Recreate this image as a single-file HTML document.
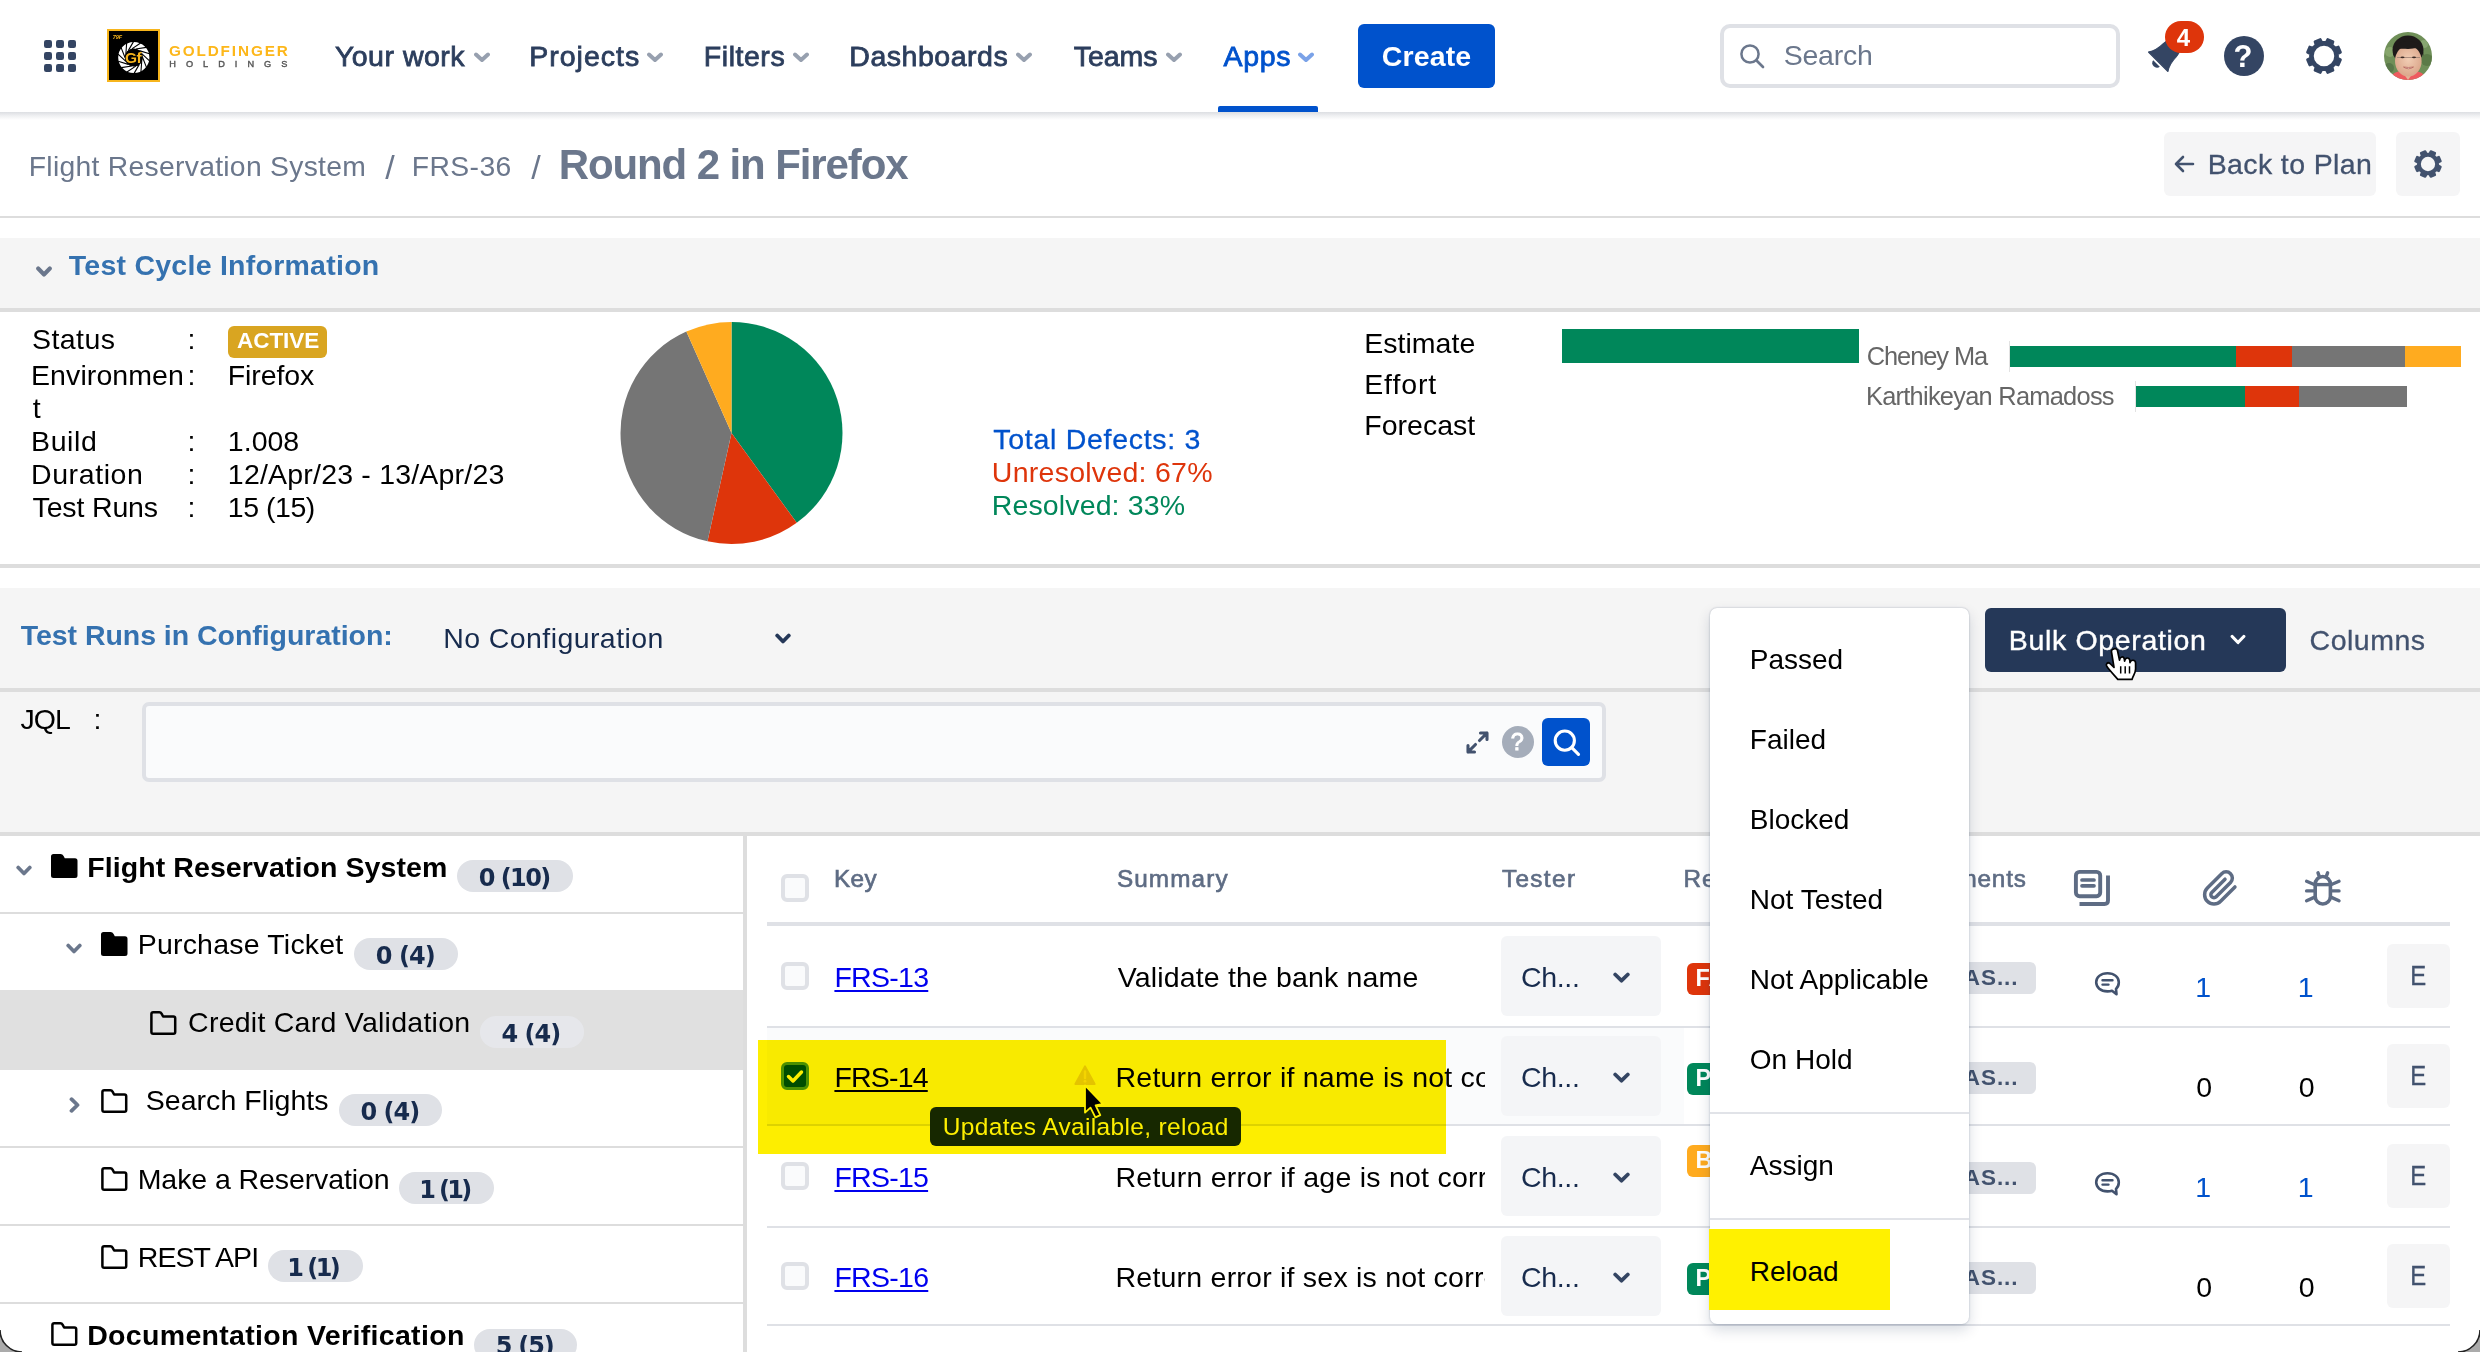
<!DOCTYPE html>
<html lang="en"><head><meta charset="utf-8"><title>Round 2 in Firefox - Test Cycle</title>
<style>
html,body{margin:0;padding:0;background:#fff;}
body{width:2480px;height:1352px;overflow:hidden;position:relative;font-family:"Liberation Sans",sans-serif;font-variant-ligatures:none;}
.t{position:absolute;white-space:nowrap;line-height:1;margin:0;padding:0;}
.r{position:absolute;box-sizing:border-box;}
a.t{text-decoration:underline;}
</style></head><body>
<div class="r" style="left:0px;top:112px;width:2480px;height:8px;background:linear-gradient(#DCDEE2,#EEEFF1 45%,#fff);"></div>
<div class="r" style="left:0px;top:215.5px;width:2480px;height:2.0px;background:#DDDDDD;"></div>
<div class="r" style="left:0px;top:238px;width:2480px;height:70px;background:#F5F5F5;"></div>
<div class="r" style="left:0px;top:308px;width:2480px;height:4px;background:#DDDDDD;"></div>
<div class="r" style="left:0px;top:564px;width:2480px;height:4px;background:#DDDDDD;"></div>
<div class="r" style="left:0px;top:588px;width:2480px;height:100px;background:#F5F5F5;"></div>
<div class="r" style="left:0px;top:688px;width:2480px;height:4px;background:#DDDDDD;"></div>
<div class="r" style="left:0px;top:692px;width:2480px;height:140px;background:#F5F5F5;"></div>
<div class="r" style="left:0px;top:832px;width:2480px;height:4px;background:#DDDDDD;"></div>
<div class="r" style="left:743px;top:836px;width:4px;height:516px;background:#DDDDDD;"></div>
<svg class="r" style="left:44px;top:40px;" width="32" height="32" viewBox="0 0 32 32"><rect x="0" y="0" width="8" height="8" rx="2.2" fill="#344563"/><rect x="12" y="0" width="8" height="8" rx="2.2" fill="#344563"/><rect x="24" y="0" width="8" height="8" rx="2.2" fill="#344563"/><rect x="0" y="12" width="8" height="8" rx="2.2" fill="#344563"/><rect x="12" y="12" width="8" height="8" rx="2.2" fill="#344563"/><rect x="24" y="12" width="8" height="8" rx="2.2" fill="#344563"/><rect x="0" y="24" width="8" height="8" rx="2.2" fill="#344563"/><rect x="12" y="24" width="8" height="8" rx="2.2" fill="#344563"/><rect x="24" y="24" width="8" height="8" rx="2.2" fill="#344563"/></svg>
<svg class="r" style="left:107px;top:29px;" width="53" height="53" viewBox="0 0 53 53"><rect x="1" y="1" width="51" height="51" fill="#000" stroke="#F7B51C" stroke-width="2"/>
<circle cx="26.8" cy="28.5" r="12.20" fill="none" stroke="#fff" stroke-width="6.80"/>
<path d="M35.60 28.50 L39.49 38.41 M34.73 32.32 L33.93 42.94 M32.29 35.38 L26.96 44.60 M28.76 37.08 L19.96 43.07 M24.84 37.08 L14.31 38.66 M21.31 35.38 L11.14 32.24 M18.87 32.32 L11.07 25.07 M18.00 28.50 L14.11 18.59 M18.87 24.68 L19.67 14.06 M21.31 21.62 L26.64 12.40 M24.84 19.92 L33.64 13.93 M28.76 19.92 L39.29 18.34 M32.29 21.62 L42.46 24.76 M34.73 24.68 L42.53 31.93 " stroke="#000" stroke-width="1.1" fill="none"/>
<circle cx="26.8" cy="28.5" r="9.100000000000001" fill="#000"/></svg>
<span class="t"  style="left:112.75px;top:34.83px;font-size:5.5px;color:#F7B51C;font-weight:bold;font-style:italic;">79F</span>
<span class="t"  style="left:125.08px;top:50.12px;font-size:15.5px;color:#F7B51C;font-weight:bold;letter-spacing:-0.663px;">Gf</span>
<span class="t"  style="left:168.89px;top:42.99px;font-size:15.3px;color:#FDB71A;font-weight:bold;letter-spacing:1.883px;">GOLDFINGER</span>
<span class="t"  style="left:169.26px;top:59.68px;font-size:9.2px;color:#555;letter-spacing:10.018px;-webkit-text-stroke:0.4px #555;">HOLDINGS</span>
<span class="t"  style="left:334.89px;top:42.08px;font-size:28.5px;color:#2C3E5D;letter-spacing:0.503px;-webkit-text-stroke:0.8px #2C3E5D;">Your work</span>
<svg class="r" style="left:474px;top:51.5px;" width="16" height="11" viewBox="0 0 16 11"><path d="M2 2.5 L8 8 L14 2.5" fill="none" stroke="#97A0AF" stroke-width="4" stroke-linecap="round" stroke-linejoin="round"/></svg>
<span class="t"  style="left:529.32px;top:42.08px;font-size:28.5px;color:#2C3E5D;letter-spacing:0.985px;-webkit-text-stroke:0.8px #2C3E5D;">Projects</span>
<svg class="r" style="left:647px;top:51.5px;" width="16" height="11" viewBox="0 0 16 11"><path d="M2 2.5 L8 8 L14 2.5" fill="none" stroke="#97A0AF" stroke-width="4" stroke-linecap="round" stroke-linejoin="round"/></svg>
<span class="t"  style="left:703.82px;top:42.08px;font-size:28.5px;color:#2C3E5D;letter-spacing:0.543px;-webkit-text-stroke:0.8px #2C3E5D;">Filters</span>
<svg class="r" style="left:793px;top:51.5px;" width="16" height="11" viewBox="0 0 16 11"><path d="M2 2.5 L8 8 L14 2.5" fill="none" stroke="#97A0AF" stroke-width="4" stroke-linecap="round" stroke-linejoin="round"/></svg>
<span class="t"  style="left:849.32px;top:42.08px;font-size:28.5px;color:#2C3E5D;letter-spacing:0.518px;-webkit-text-stroke:0.8px #2C3E5D;">Dashboards</span>
<svg class="r" style="left:1016px;top:51.5px;" width="16" height="11" viewBox="0 0 16 11"><path d="M2 2.5 L8 8 L14 2.5" fill="none" stroke="#97A0AF" stroke-width="4" stroke-linecap="round" stroke-linejoin="round"/></svg>
<span class="t"  style="left:1073.69px;top:42.08px;font-size:28.5px;color:#2C3E5D;letter-spacing:-0.006px;-webkit-text-stroke:0.8px #2C3E5D;">Teams</span>
<svg class="r" style="left:1166px;top:51.5px;" width="16" height="11" viewBox="0 0 16 11"><path d="M2 2.5 L8 8 L14 2.5" fill="none" stroke="#97A0AF" stroke-width="4" stroke-linecap="round" stroke-linejoin="round"/></svg>
<span class="t"  style="left:1223.46px;top:42.08px;font-size:28.5px;color:#0052CC;letter-spacing:0.720px;-webkit-text-stroke:0.8px #0052CC;">Apps</span>
<svg class="r" style="left:1298px;top:51.5px;" width="16" height="11" viewBox="0 0 16 11"><path d="M2 2.5 L8 8 L14 2.5" fill="none" stroke="#7AA2E8" stroke-width="4" stroke-linecap="round" stroke-linejoin="round"/></svg>
<div class="r" style="left:1218px;top:106px;width:100px;height:6px;background:#0052CC;border-radius:2px 2px 0 0;"></div>
<div class="r" style="left:1358px;top:24px;width:137px;height:64px;background:#0052CC;border-radius:6px;"></div>
<span class="t"  style="left:1381.86px;top:42.08px;font-size:28.5px;color:#fff;font-weight:bold;letter-spacing:0.100px;">Create</span>
<div class="r" style="left:1720px;top:24px;width:400px;height:64px;background:#fff;border-radius:10px;border:4px solid #DFE1E6;"></div>
<svg class="r" style="left:1738px;top:42px;" width="30" height="30" viewBox="0 0 30 30"><circle cx="12" cy="12" r="8.6" fill="none" stroke="#6B778C" stroke-width="2.5"/><path d="M18.5 18.5 L25 25" stroke="#6B778C" stroke-width="2.7" stroke-linecap="round"/></svg>
<span class="t"  style="left:1783.72px;top:41.28px;font-size:28.5px;color:#6B778C;letter-spacing:-0.254px;">Search</span>
<svg class="r" style="left:2140px;top:26px;" width="54" height="54" viewBox="0 0 54 54"><g transform="translate(27 27) rotate(45)"><path d="M-13.8 12.5 C-10.5 7.5 -9.3 2 -9.3 -4 C-9.3 -10.5 -5 -14.5 0 -14.5 C5 -14.5 9.3 -10.5 9.3 -4 C9.3 2 10.5 7.5 13.8 12.5 Z" fill="#344563" stroke="#344563" stroke-width="1" stroke-linejoin="round"/><path d="M-4.6 14.8 H4.6 a4.6 4 0 0 1 -9.2 0 Z" fill="#344563"/></g></svg>
<div class="r" style="left:2165px;top:21px;width:39px;height:32px;background:#DE350B;border-radius:16px;"></div>
<span class="t"  style="left:2176.64px;top:25.80px;font-size:24px;color:#fff;font-weight:bold;">4</span>
<svg class="r" style="left:2224px;top:36px;" width="40" height="40" viewBox="0 0 40 40"><circle cx="20" cy="20" r="20" fill="#344563"/></svg>
<span class="t"  style="left:2233.61px;top:40.65px;font-size:31px;color:#fff;font-weight:bold;">?</span>
<svg class="r" style="left:2303.5px;top:35.5px;" width="40" height="40" viewBox="0 0 40 40"><path d="M23.71 3.41 L29.11 5.65 L28.11 8.84 L31.16 11.89 L34.35 10.89 L36.59 16.29 L33.63 17.84 L33.63 22.16 L36.59 23.71 L34.35 29.11 L31.16 28.11 L28.11 31.16 L29.11 34.35 L23.71 36.59 L22.16 33.63 L17.84 33.63 L16.29 36.59 L10.89 34.35 L11.89 31.16 L8.84 28.11 L5.65 29.11 L3.41 23.71 L6.37 22.16 L6.37 17.84 L3.41 16.29 L5.65 10.89 L8.84 11.89 L11.89 8.84 L10.89 5.65 L16.29 3.41 L17.84 6.37 L22.16 6.37 Z M8.5 20 a11.5 11.5 0 1 0 23.0 0 a11.5 11.5 0 1 0 -23.0 0 Z" fill="#344563" fill-rule="evenodd" stroke="#344563" stroke-width="2.5" stroke-linejoin="round"/></svg>
<svg class="r" style="left:2384px;top:32px;" width="48" height="48" viewBox="0 0 48 48"><defs><clipPath id="avc"><circle cx="24" cy="24" r="24"/></clipPath>
<radialGradient id="avf" cx="50%" cy="45%" r="60%"><stop offset="0" stop-color="#F1CDB4"/><stop offset="1" stop-color="#D9A387"/></radialGradient></defs>
<g clip-path="url(#avc)"><rect width="48" height="48" fill="#6F8F58"/>
<circle cx="6" cy="20" r="5" fill="#86A56B"/><circle cx="43" cy="28" r="6" fill="#5B7A47"/><circle cx="40" cy="12" r="4" fill="#87A670"/><circle cx="5" cy="36" r="5" fill="#59784A"/>
<path d="M6 48 C8 40 15 38 24 39 C33 38 40 40 43 48 Z" fill="#EE5B5F"/>
<ellipse cx="24" cy="18" rx="15.5" ry="14.5" fill="#1E1A19"/>
<path d="M17 38 L24 48 L31 38 Z" fill="#E3B398"/>
<ellipse cx="24.3" cy="29" rx="13.3" ry="15.5" fill="url(#avf)"/>
<path d="M9 24 C9 12 16 9 24 9.5 C33 9 39.5 12 39.5 24 C38 18 34 15.5 29 16.5 C22 18 15 15 12 19 C10.5 21 10 23 9 24 Z" fill="#1E1A19"/>
<path d="M13 25.5 H36" stroke="#9b7f72" stroke-width="0.8" fill="none"/>
<ellipse cx="18.5" cy="25.3" rx="2" ry="0.9" fill="#3a2a25"/><ellipse cx="30" cy="25.3" rx="2" ry="0.9" fill="#3a2a25"/>
<path d="M19.5 35 Q24.5 38.5 29.5 35 Q24.5 36 19.5 35 Z" fill="#fff" stroke="#B5635A" stroke-width="0.8"/>
</g></svg>
<span class="t"  style="left:28.74px;top:151.75px;font-size:28.3px;color:#6B778C;letter-spacing:0.285px;">Flight Reservation System</span>
<span class="t"  style="left:385.30px;top:149.60px;font-size:34px;color:#6B778C;">/</span>
<span class="t"  style="left:411.74px;top:151.75px;font-size:28.3px;color:#6B778C;letter-spacing:0.409px;">FRS-36</span>
<span class="t"  style="left:531.30px;top:149.60px;font-size:34px;color:#6B778C;">/</span>
<span class="t"  style="left:558.77px;top:143.50px;font-size:42px;color:#6B778C;font-weight:bold;letter-spacing:-1.112px;">Round 2 in Firefox</span>
<div class="r" style="left:2164px;top:132px;width:212px;height:64px;background:#F5F5F6;border-radius:6px;"></div>
<svg class="r" style="left:2173px;top:154px;" width="22" height="20" viewBox="0 0 22 20"><path d="M20 10 L3 10 M10 3 L3 10 L10 17" fill="none" stroke="#42526E" stroke-width="2.6" stroke-linecap="round" stroke-linejoin="round"/></svg>
<span class="t"  style="left:2207.72px;top:149.78px;font-size:28.5px;color:#42526E;letter-spacing:0.373px;-webkit-text-stroke:0.3px #42526E;">Back to Plan</span>
<div class="r" style="left:2396px;top:132px;width:64px;height:64px;background:#F5F5F6;border-radius:6px;"></div>
<svg class="r" style="left:2412px;top:148px;" width="32" height="32" viewBox="0 0 32 32"><path d="M18.79 3.51 L22.86 5.19 L21.88 7.91 L24.09 10.12 L26.81 9.14 L28.49 13.21 L25.88 14.44 L25.88 17.56 L28.49 18.79 L26.81 22.86 L24.09 21.88 L21.88 24.09 L22.86 26.81 L18.79 28.49 L17.56 25.88 L14.44 25.88 L13.21 28.49 L9.14 26.81 L10.12 24.09 L7.91 21.88 L5.19 22.86 L3.51 18.79 L6.12 17.56 L6.12 14.44 L3.51 13.21 L5.19 9.14 L7.91 10.12 L10.12 7.91 L9.14 5.19 L13.21 3.51 L14.44 6.12 L17.56 6.12 Z M7.6 16 a8.4 8.4 0 1 0 16.8 0 a8.4 8.4 0 1 0 -16.8 0 Z" fill="#42526E" fill-rule="evenodd" stroke="#42526E" stroke-width="2.5" stroke-linejoin="round"/></svg>
<svg class="r" style="left:36px;top:266px;" width="16" height="12" viewBox="0 0 16 12"><path d="M2.2 2.5 L8 8.5 L13.8 2.5" fill="none" stroke="#6B778C" stroke-width="4.1" stroke-linecap="round" stroke-linejoin="round"/></svg>
<span class="t"  style="left:68.72px;top:250.78px;font-size:28.5px;color:#3572B0;font-weight:bold;letter-spacing:0.257px;">Test Cycle Information</span>
<span class="t"  style="left:32.02px;top:324.77px;font-size:28.5px;color:#000;letter-spacing:0.437px;">Status</span>
<span class="t"  style="left:31.02px;top:360.77px;font-size:28.5px;color:#000;letter-spacing:0.087px;">Environmen</span>
<span class="t"  style="left:32.87px;top:393.77px;font-size:28.5px;color:#000;">t</span>
<span class="t"  style="left:31.02px;top:427.27px;font-size:28.5px;color:#000;letter-spacing:0.605px;">Build</span>
<span class="t"  style="left:31.02px;top:459.77px;font-size:28.5px;color:#000;letter-spacing:0.586px;">Duration</span>
<span class="t"  style="left:32.59px;top:493.27px;font-size:28.5px;color:#000;letter-spacing:-0.159px;">Test Runs</span>
<span class="t"  style="left:187.44px;top:324.77px;font-size:28.5px;color:#000;">:</span>
<span class="t"  style="left:187.44px;top:360.77px;font-size:28.5px;color:#000;">:</span>
<span class="t"  style="left:187.44px;top:427.27px;font-size:28.5px;color:#000;">:</span>
<span class="t"  style="left:187.44px;top:459.77px;font-size:28.5px;color:#000;">:</span>
<span class="t"  style="left:187.44px;top:493.27px;font-size:28.5px;color:#000;">:</span>
<div class="r" style="left:228px;top:326px;width:99px;height:32px;background:#D9A521;border-radius:6px;"></div>
<span class="t"  style="left:236.94px;top:330.38px;font-size:22.5px;color:#fff;font-weight:bold;letter-spacing:-0.022px;">ACTIVE</span>
<span class="t"  style="left:227.72px;top:360.77px;font-size:28.5px;color:#000;letter-spacing:-0.084px;">Firefox</span>
<span class="t"  style="left:227.86px;top:427.27px;font-size:28.5px;color:#000;letter-spacing:0.007px;">1.008</span>
<span class="t"  style="left:227.86px;top:459.77px;font-size:28.5px;color:#000;letter-spacing:0.198px;">12/Apr/23 - 13/Apr/23</span>
<span class="t"  style="left:227.86px;top:493.27px;font-size:28.5px;color:#000;letter-spacing:-0.476px;">15 (15)</span>
<svg class="r" style="left:0px;top:0px;pointer-events:none;" width="2480" height="1352" viewBox="0 0 2480 1352"><path d="M731.5 433 L731.50 322.00 A111 111 0 0 1 796.74 522.80 Z" fill="#00875A"/><path d="M731.5 433 L796.74 522.80 A111 111 0 0 1 707.48 541.37 Z" fill="#DE350B"/><path d="M731.5 433 L707.48 541.37 A111 111 0 0 1 686.35 331.60 Z" fill="#757575"/><path d="M731.5 433 L686.35 331.60 A111 111 0 0 1 731.50 322.00 Z" fill="#FFAB1F"/></svg>
<span class="t"  style="left:993.29px;top:424.77px;font-size:28.5px;color:#0052CC;letter-spacing:0.709px;-webkit-text-stroke:0.3px #0052CC;">Total Defects: 3</span>
<span class="t"  style="left:991.86px;top:457.77px;font-size:28.5px;color:#DE350B;letter-spacing:0.258px;">Unresolved: 67%</span>
<span class="t"  style="left:991.72px;top:490.77px;font-size:28.5px;color:#00875A;letter-spacing:0.135px;">Resolved: 33%</span>
<span class="t"  style="left:1364.22px;top:328.77px;font-size:28.5px;color:#000;letter-spacing:0.028px;">Estimate</span>
<span class="t"  style="left:1364.22px;top:369.77px;font-size:28.5px;color:#000;letter-spacing:0.875px;">Effort</span>
<span class="t"  style="left:1364.22px;top:410.77px;font-size:28.5px;color:#000;letter-spacing:0.029px;">Forecast</span>
<div class="r" style="left:1562px;top:328.5px;width:297px;height:34.5px;background:#00875A;"></div>
<span class="t"  style="left:1866.73px;top:344.21px;font-size:25.4px;color:#666;letter-spacing:-1.044px;">Cheney Ma</span>
<span class="t"  style="left:1865.97px;top:384.21px;font-size:25.4px;color:#666;letter-spacing:-0.732px;">Karthikeyan Ramadoss</span>
<div class="r" style="left:2009px;top:341px;width:1px;height:31px;background:#E2E2E2;"></div>
<div class="r" style="left:2010px;top:346.2px;width:225.5px;height:21.0px;background:#00875A;"></div>
<div class="r" style="left:2235.5px;top:346.2px;width:56.0px;height:21.0px;background:#DE350B;"></div>
<div class="r" style="left:2291.5px;top:346.2px;width:113.0px;height:21.0px;background:#757575;"></div>
<div class="r" style="left:2404.5px;top:346.2px;width:56.5px;height:21.0px;background:#FFAB1F;"></div>
<div class="r" style="left:2134.5px;top:381px;width:1.0px;height:31px;background:#E2E2E2;"></div>
<div class="r" style="left:2135.5px;top:386.2px;width:109.0px;height:21.0px;background:#00875A;"></div>
<div class="r" style="left:2244.5px;top:386.2px;width:54.0px;height:21.0px;background:#DE350B;"></div>
<div class="r" style="left:2298.5px;top:386.2px;width:108.5px;height:21.0px;background:#757575;"></div>
<span class="t"  style="left:20.71px;top:620.77px;font-size:28.5px;color:#3572B0;font-weight:bold;letter-spacing:-0.041px;">Test Runs in Configuration:</span>
<span class="t"  style="left:443.22px;top:624.27px;font-size:28.5px;color:#172B4D;letter-spacing:0.416px;">No Configuration</span>
<svg class="r" style="left:775px;top:633px;" width="16" height="12" viewBox="0 0 16 12"><path d="M2.2 2.5 L8 8.5 L13.8 2.5" fill="none" stroke="#253858" stroke-width="3.8" stroke-linecap="round" stroke-linejoin="round"/></svg>
<div class="r" style="left:1985px;top:608px;width:301px;height:64px;background:#253858;border-radius:6px;"></div>
<span class="t"  style="left:2008.72px;top:625.77px;font-size:28.5px;color:#fff;letter-spacing:0.662px;-webkit-text-stroke:0.4px #fff;">Bulk Operation</span>
<svg class="r" style="left:2230px;top:634px;" width="16" height="12" viewBox="0 0 16 12"><path d="M2.2 2.5 L8 8.5 L13.8 2.5" fill="none" stroke="#fff" stroke-width="3.2" stroke-linecap="round" stroke-linejoin="round"/></svg>
<span class="t"  style="left:2309.57px;top:625.77px;font-size:28.5px;color:#42526E;letter-spacing:0.498px;-webkit-text-stroke:0.3px #42526E;">Columns</span>
<span class="t"  style="left:20.57px;top:704.77px;font-size:28.5px;color:#000;letter-spacing:-1.008px;">JQL</span>
<span class="t"  style="left:93.44px;top:704.77px;font-size:28.5px;color:#000;">:</span>
<div class="r" style="left:142px;top:702px;width:1464px;height:80px;background:#FAFBFC;border-radius:7px;border:4px solid #DFE1E6;"></div>
<svg class="r" style="left:1465px;top:730px;" width="25" height="25" viewBox="0 0 25 25"><path d="M14.5 10.5 L22 3 M15.5 3 L22 3 L22 9.5 M10.5 14.5 L3 22 M3 15.5 L3 22 L9.5 22" fill="none" stroke="#42526E" stroke-width="3.1" stroke-linecap="round" stroke-linejoin="round"/></svg>
<svg class="r" style="left:1502px;top:726px;" width="32" height="32" viewBox="0 0 32 32"><circle cx="16" cy="16" r="16" fill="#A5ADBA"/></svg>
<span class="t"  style="left:1510.86px;top:730.52px;font-size:23.5px;color:#fff;-webkit-text-stroke:0.9px #fff;">?</span>
<div class="r" style="left:1542px;top:718px;width:48px;height:48px;background:#0052CC;border-radius:6px;"></div>
<svg class="r" style="left:1552px;top:728px;" width="30" height="30" viewBox="0 0 30 30"><circle cx="12.8" cy="12.6" r="9.6" fill="none" stroke="#fff" stroke-width="3.1"/><path d="M19.8 19.6 L26.5 26.3" stroke="#fff" stroke-width="3.1" stroke-linecap="round"/></svg>
<div class="r" style="left:0px;top:990px;width:743px;height:80px;background:#E0E0E0;"></div>
<div class="r" style="left:0px;top:912px;width:743px;height:2px;background:#DDDDDD;"></div>
<div class="r" style="left:0px;top:1146px;width:743px;height:2px;background:#DDDDDD;"></div>
<div class="r" style="left:0px;top:1224px;width:743px;height:2px;background:#DDDDDD;"></div>
<div class="r" style="left:0px;top:1302px;width:743px;height:2px;background:#DDDDDD;"></div>
<svg class="r" style="left:16px;top:864.5px;" width="16" height="12" viewBox="0 0 16 12"><path d="M2.2 2.5 L8 8.5 L13.8 2.5" fill="none" stroke="#6B778C" stroke-width="3.7" stroke-linecap="round" stroke-linejoin="round"/></svg>
<svg class="r" style="left:51px;top:854px;" width="27" height="24" viewBox="0 0 27 24"><path d="M2.5 0 H9.5 Q11.6 0 12.6 1.9 L13.8 4.2 H24 Q26.5 4.2 26.5 6.7 V21.5 Q26.5 24 24 24 H2.5 Q0 24 0 21.5 V2.5 Q0 0 2.5 0 Z" fill="#000"/></svg>
<span class="t"  style="left:87.15px;top:852.77px;font-size:28.5px;color:#000;font-weight:bold;letter-spacing:0.094px;">Flight Reservation System</span>
<div class="r" style="left:457px;top:860px;width:115.5px;height:32px;background:#DFE1E6;border-radius:16px;"></div>
<span class="t"  style="left:478.80px;top:865.72px;font-size:24px;color:#172B4D;font-weight:bold;letter-spacing:-1.592px;font-family:'DejaVu Sans',sans-serif;">0 (10)</span>
<svg class="r" style="left:66px;top:942.5px;" width="16" height="12" viewBox="0 0 16 12"><path d="M2.2 2.5 L8 8.5 L13.8 2.5" fill="none" stroke="#6B778C" stroke-width="3.7" stroke-linecap="round" stroke-linejoin="round"/></svg>
<svg class="r" style="left:100.75px;top:932px;" width="27" height="24" viewBox="0 0 27 24"><path d="M2.5 0 H9.5 Q11.6 0 12.6 1.9 L13.8 4.2 H24 Q26.5 4.2 26.5 6.7 V21.5 Q26.5 24 24 24 H2.5 Q0 24 0 21.5 V2.5 Q0 0 2.5 0 Z" fill="#000"/></svg>
<span class="t"  style="left:137.72px;top:930.07px;font-size:28.5px;color:#000;letter-spacing:0.199px;">Purchase Ticket</span>
<div class="r" style="left:354px;top:938px;width:103.5px;height:32px;background:#DFE1E6;border-radius:16px;"></div>
<span class="t"  style="left:375.80px;top:943.72px;font-size:24px;color:#172B4D;font-weight:bold;letter-spacing:-0.915px;font-family:'DejaVu Sans',sans-serif;">0 (4)</span>
<svg class="r" style="left:149.75px;top:1010.5px;" width="27" height="24" viewBox="0 0 27 24"><path d="M3.2 1.3 H9.3 Q10.9 1.3 11.7 2.8 L13.1 5.5 H23.4 Q25.2 5.5 25.2 7.3 V20.9 Q25.2 22.7 23.4 22.7 H3.2 Q1.4 22.7 1.4 20.9 V3.1 Q1.4 1.3 3.2 1.3 Z" fill="none" stroke="#000" stroke-width="2.5" stroke-linejoin="round"/></svg>
<span class="t"  style="left:188.07px;top:1008.48px;font-size:28.5px;color:#000;letter-spacing:0.254px;">Credit Card Validation</span>
<div class="r" style="left:480px;top:1016px;width:103.70000000000005px;height:32px;background:#E6E7EB;border-radius:16px;"></div>
<span class="t"  style="left:501.42px;top:1021.72px;font-size:24px;color:#172B4D;font-weight:bold;letter-spacing:-0.945px;font-family:'DejaVu Sans',sans-serif;">4 (4)</span>
<svg class="r" style="left:69px;top:1096.5px;" width="12" height="16" viewBox="0 0 12 16"><path d="M2.5 2.2 L8.5 8 L2.5 13.8" fill="none" stroke="#6B778C" stroke-width="3.8" stroke-linecap="round" stroke-linejoin="round"/></svg>
<svg class="r" style="left:100.75px;top:1088.5px;" width="27" height="24" viewBox="0 0 27 24"><path d="M3.2 1.3 H9.3 Q10.9 1.3 11.7 2.8 L13.1 5.5 H23.4 Q25.2 5.5 25.2 7.3 V20.9 Q25.2 22.7 23.4 22.7 H3.2 Q1.4 22.7 1.4 20.9 V3.1 Q1.4 1.3 3.2 1.3 Z" fill="none" stroke="#000" stroke-width="2.5" stroke-linejoin="round"/></svg>
<span class="t"  style="left:145.72px;top:1086.48px;font-size:28.5px;color:#000;letter-spacing:0.051px;">Search Flights</span>
<div class="r" style="left:339px;top:1094px;width:102.69999999999999px;height:32px;background:#DFE1E6;border-radius:16px;"></div>
<span class="t"  style="left:360.50px;top:1099.72px;font-size:24px;color:#172B4D;font-weight:bold;letter-spacing:-1.015px;font-family:'DejaVu Sans',sans-serif;">0 (4)</span>
<svg class="r" style="left:100.75px;top:1166.5px;" width="27" height="24" viewBox="0 0 27 24"><path d="M3.2 1.3 H9.3 Q10.9 1.3 11.7 2.8 L13.1 5.5 H23.4 Q25.2 5.5 25.2 7.3 V20.9 Q25.2 22.7 23.4 22.7 H3.2 Q1.4 22.7 1.4 20.9 V3.1 Q1.4 1.3 3.2 1.3 Z" fill="none" stroke="#000" stroke-width="2.5" stroke-linejoin="round"/></svg>
<span class="t"  style="left:137.72px;top:1164.78px;font-size:28.5px;color:#000;letter-spacing:-0.090px;">Make a Reservation</span>
<div class="r" style="left:399.2px;top:1172px;width:94.5px;height:32px;background:#DFE1E6;border-radius:16px;"></div>
<span class="t"  style="left:419.24px;top:1177.72px;font-size:24px;color:#172B4D;font-weight:bold;letter-spacing:-2.700px;font-family:'DejaVu Sans',sans-serif;">1 (1)</span>
<svg class="r" style="left:100.75px;top:1244.5px;" width="27" height="24" viewBox="0 0 27 24"><path d="M3.2 1.3 H9.3 Q10.9 1.3 11.7 2.8 L13.1 5.5 H23.4 Q25.2 5.5 25.2 7.3 V20.9 Q25.2 22.7 23.4 22.7 H3.2 Q1.4 22.7 1.4 20.9 V3.1 Q1.4 1.3 3.2 1.3 Z" fill="none" stroke="#000" stroke-width="2.5" stroke-linejoin="round"/></svg>
<span class="t"  style="left:137.72px;top:1242.78px;font-size:28.5px;color:#000;letter-spacing:-0.919px;">REST API</span>
<div class="r" style="left:268px;top:1250px;width:94.5px;height:32px;background:#DFE1E6;border-radius:16px;"></div>
<span class="t"  style="left:287.24px;top:1255.72px;font-size:24px;color:#172B4D;font-weight:bold;letter-spacing:-2.525px;font-family:'DejaVu Sans',sans-serif;">1 (1)</span>
<svg class="r" style="left:51px;top:1322px;" width="27" height="24" viewBox="0 0 27 24"><path d="M3.2 1.3 H9.3 Q10.9 1.3 11.7 2.8 L13.1 5.5 H23.4 Q25.2 5.5 25.2 7.3 V20.9 Q25.2 22.7 23.4 22.7 H3.2 Q1.4 22.7 1.4 20.9 V3.1 Q1.4 1.3 3.2 1.3 Z" fill="none" stroke="#000" stroke-width="2.5" stroke-linejoin="round"/></svg>
<span class="t"  style="left:87.15px;top:1320.78px;font-size:28.5px;color:#000;font-weight:bold;letter-spacing:0.329px;">Documentation Verification</span>
<div class="r" style="left:474.2px;top:1328.5px;width:102.50000000000006px;height:32.0px;background:#DFE1E6;border-radius:16px;"></div>
<span class="t"  style="left:495.70px;top:1334.22px;font-size:24px;color:#172B4D;font-weight:bold;letter-spacing:-1.190px;font-family:'DejaVu Sans',sans-serif;">5 (5)</span>
<div class="r" style="left:781px;top:874px;width:28px;height:28px;background:#FAFBFC;border-radius:6px;border:4px solid #DFE1E6;"></div>
<span class="t"  style="left:834.06px;top:866.64px;font-size:24.3px;color:#5E6C84;letter-spacing:0.324px;-webkit-text-stroke:0.65px #5E6C84;">Key</span>
<span class="t"  style="left:1116.91px;top:866.64px;font-size:24.3px;color:#5E6C84;letter-spacing:1.118px;-webkit-text-stroke:0.65px #5E6C84;">Summary</span>
<span class="t"  style="left:1501.89px;top:866.64px;font-size:24.3px;color:#5E6C84;letter-spacing:1.395px;-webkit-text-stroke:0.65px #5E6C84;">Tester</span>
<span class="t"  style="left:1683.56px;top:866.64px;font-size:24.3px;color:#5E6C84;-webkit-text-stroke:0.65px #5E6C84;letter-spacing:1px;">Result</span>
<span class="t"  style="left:1866.06px;top:866.64px;font-size:24.3px;color:#5E6C84;letter-spacing:0.775px;-webkit-text-stroke:0.65px #5E6C84;">Requirements</span>
<div class="r" style="left:767px;top:922px;width:1683px;height:4px;background:#DFE1E6;"></div>
<svg class="r" style="left:2070px;top:866px;" width="44" height="44" viewBox="0 0 44 44"><path d="M38 9.5 V34.5 Q38 38 34.5 38 H9.5" fill="none" stroke="#5E6C84" stroke-width="3.9" stroke-linecap="butt" stroke-linejoin="round"/><rect x="5.9" y="5.9" width="24.3" height="24.3" rx="3.6" fill="#fff" stroke="#5E6C84" stroke-width="3.9"/><path d="M12 14 H24 M12 19.8 H24" stroke="#5E6C84" stroke-width="3.7" stroke-linecap="round"/></svg>
<svg class="r" style="left:2197px;top:864px;" width="48" height="48" viewBox="0 0 48 48"><g transform="translate(4.5 5.7) scale(1.56)"><path d="M21.44 11.05l-9.19 9.19a6 6 0 0 1-8.49-8.49l9.19-9.19a4 4 0 0 1 5.66 5.66l-9.2 9.19a2 2 0 0 1-2.83-2.83l8.49-8.48" fill="none" stroke="#5E6C84" stroke-width="2.25" stroke-linecap="round" stroke-linejoin="round"/></g></svg>
<svg class="r" style="left:2300px;top:864px;" width="46" height="46" viewBox="0 0 46 46"><rect x="15.2" y="12.55" width="15.2" height="27.45" rx="7.6" fill="none" stroke="#5E6C84" stroke-width="3.6"/><path d="M15.2 20.6 H30.4" stroke="#5E6C84" stroke-width="3.4"/><path d="M19.4 12.6 L18 8.8 M26.2 12.6 L27.6 8.8 M13.6 20.2 L6.6 17.3 M13.6 26.9 H6.6 M13.6 33.6 L6.6 36.7 M32 20.2 L39 17.3 M32 26.9 H39 M32 33.6 L39 36.7" fill="none" stroke="#5E6C84" stroke-width="3.4" stroke-linecap="round"/></svg>
<div class="r" style="left:767px;top:1028px;width:917px;height:96px;background:#FAFBFC;"></div>
<div class="r" style="left:781px;top:962px;width:28px;height:28px;background:#FAFBFC;border-radius:6px;border:4px solid #DFE1E6;"></div>
<a class="t"  style="left:834.42px;top:963.07px;font-size:28.5px;color:#0000EE;letter-spacing:-0.724px;text-decoration-thickness:2px;text-underline-offset:3px;">FRS-13</a>
<div class="r" style="left:1110px;top:957.3px;width:375px;height:44px;overflow:hidden;">
<span class="t"  style="left:7.66px;top:5.78px;font-size:28.5px;color:#000;letter-spacing:0.160px;">Validate the bank name</span>
</div>
<div class="r" style="left:1501px;top:936px;width:160px;height:79.5px;background:#F4F5F7;border-radius:6px;"></div>
<span class="t"  style="left:1521.08px;top:963.07px;font-size:28.5px;color:#172B4D;letter-spacing:-0.361px;">Ch...</span>
<svg class="r" style="left:1612.5px;top:971.5px;" width="17" height="12" viewBox="0 0 17 12"><path d="M2.2 2.5 L8.5 8.7 L14.8 2.5" fill="none" stroke="#344563" stroke-width="3.8" stroke-linecap="round" stroke-linejoin="round"/></svg>
<div class="r" style="left:1687px;top:963px;width:90px;height:32px;background:#DE350B;border-radius:6px;"></div>
<span class="t"  style="left:1695.47px;top:967.32px;font-size:23.5px;color:#fff;font-weight:bold;">FAIL</span>
<div class="r" style="left:1930px;top:962px;width:106px;height:32px;background:#DFE1E6;border-radius:6px;"></div>
<span class="t"  style="left:1949.54px;top:966.88px;font-size:22.5px;color:#42526E;font-weight:bold;letter-spacing:0.917px;">PAS...</span>
<svg class="r" style="left:2094px;top:971px;" width="28" height="26" viewBox="0 0 28 26"><path d="M13.5 2.2 C6.5 2.2 2.2 6.3 2.2 11.3 C2.2 16.3 6.5 20.4 13.5 20.4 C15.2 20.4 16.6 20.2 18 19.7 L22.5 23.2 L22 18 C24 16.2 24.8 13.9 24.8 11.3 C24.8 6.3 20.5 2.2 13.5 2.2 Z" fill="none" stroke="#42526E" stroke-width="2.6" stroke-linejoin="round"/><path d="M8.5 9.2 H18.5 M8.5 13.6 H14.5" stroke="#42526E" stroke-width="2.4" stroke-linecap="round"/></svg>
<span class="t"  style="left:2195.26px;top:972.57px;font-size:28.5px;color:#0052CC;">1</span>
<span class="t"  style="left:2297.86px;top:972.57px;font-size:28.5px;color:#0052CC;">1</span>
<div class="r" style="left:2386.5px;top:944px;width:63.5px;height:64px;background:#F5F5F6;border-radius:6px;"></div>
<span class="t"  style="left:2409.52px;top:961.38px;font-size:28.5px;color:#42526E;-webkit-text-stroke:0.3px #42526E;transform:scaleX(0.84);transform-origin:2.28px 50%;">E</span>
<div class="r" style="left:767px;top:1026px;width:1683px;height:2px;background:#DFE1E6;"></div>
<a class="t"  style="left:834.42px;top:1063.08px;font-size:28.5px;color:#0000EE;letter-spacing:-0.809px;text-decoration-thickness:2px;text-underline-offset:3px;">FRS-14</a>
<div class="r" style="left:1110px;top:1057.3px;width:375px;height:44px;overflow:hidden;">
<span class="t"  style="left:5.52px;top:5.78px;font-size:28.5px;color:#000;letter-spacing:0.219px;">Return error if name is not correct</span>
</div>
<div class="r" style="left:1501px;top:1036px;width:160px;height:79.5px;background:#F4F5F7;border-radius:6px;"></div>
<span class="t"  style="left:1521.08px;top:1063.08px;font-size:28.5px;color:#172B4D;letter-spacing:-0.361px;">Ch...</span>
<svg class="r" style="left:1612.5px;top:1071.5px;" width="17" height="12" viewBox="0 0 17 12"><path d="M2.2 2.5 L8.5 8.7 L14.8 2.5" fill="none" stroke="#344563" stroke-width="3.8" stroke-linecap="round" stroke-linejoin="round"/></svg>
<div class="r" style="left:1687px;top:1063px;width:90px;height:32px;background:#00875A;border-radius:6px;"></div>
<span class="t"  style="left:1695.47px;top:1067.33px;font-size:23.5px;color:#fff;font-weight:bold;">PASS</span>
<div class="r" style="left:1930px;top:1062px;width:106px;height:32px;background:#DFE1E6;border-radius:6px;"></div>
<span class="t"  style="left:1949.54px;top:1066.88px;font-size:22.5px;color:#42526E;font-weight:bold;letter-spacing:0.917px;">PAS...</span>
<span class="t"  style="left:2196.26px;top:1072.58px;font-size:28.5px;color:#000;">0</span>
<span class="t"  style="left:2298.86px;top:1072.58px;font-size:28.5px;color:#000;">0</span>
<div class="r" style="left:2386.5px;top:1044px;width:63.5px;height:64px;background:#F5F5F6;border-radius:6px;"></div>
<span class="t"  style="left:2409.52px;top:1061.38px;font-size:28.5px;color:#42526E;-webkit-text-stroke:0.3px #42526E;transform:scaleX(0.84);transform-origin:2.28px 50%;">E</span>
<div class="r" style="left:767px;top:1124px;width:1683px;height:2px;background:#DFE1E6;"></div>
<div class="r" style="left:781px;top:1162px;width:28px;height:28px;background:#FAFBFC;border-radius:6px;border:4px solid #DFE1E6;"></div>
<a class="t"  style="left:834.42px;top:1163.08px;font-size:28.5px;color:#0000EE;letter-spacing:-0.752px;text-decoration-thickness:2px;text-underline-offset:3px;">FRS-15</a>
<div class="r" style="left:1110px;top:1157.3px;width:375px;height:44px;overflow:hidden;">
<span class="t"  style="left:5.52px;top:5.78px;font-size:28.5px;color:#000;letter-spacing:0.248px;">Return error if age is not correct</span>
</div>
<div class="r" style="left:1501px;top:1136px;width:160px;height:79.5px;background:#F4F5F7;border-radius:6px;"></div>
<span class="t"  style="left:1521.08px;top:1163.08px;font-size:28.5px;color:#172B4D;letter-spacing:-0.361px;">Ch...</span>
<svg class="r" style="left:1612.5px;top:1171.5px;" width="17" height="12" viewBox="0 0 17 12"><path d="M2.2 2.5 L8.5 8.7 L14.8 2.5" fill="none" stroke="#344563" stroke-width="3.8" stroke-linecap="round" stroke-linejoin="round"/></svg>
<div class="r" style="left:1687px;top:1145px;width:90px;height:32px;background:#FFAB1F;border-radius:6px;"></div>
<span class="t"  style="left:1695.47px;top:1149.33px;font-size:23.5px;color:#fff;font-weight:bold;">BLOCKED</span>
<div class="r" style="left:1930px;top:1162px;width:106px;height:32px;background:#DFE1E6;border-radius:6px;"></div>
<span class="t"  style="left:1949.54px;top:1166.88px;font-size:22.5px;color:#42526E;font-weight:bold;letter-spacing:0.917px;">PAS...</span>
<svg class="r" style="left:2094px;top:1171px;" width="28" height="26" viewBox="0 0 28 26"><path d="M13.5 2.2 C6.5 2.2 2.2 6.3 2.2 11.3 C2.2 16.3 6.5 20.4 13.5 20.4 C15.2 20.4 16.6 20.2 18 19.7 L22.5 23.2 L22 18 C24 16.2 24.8 13.9 24.8 11.3 C24.8 6.3 20.5 2.2 13.5 2.2 Z" fill="none" stroke="#42526E" stroke-width="2.6" stroke-linejoin="round"/><path d="M8.5 9.2 H18.5 M8.5 13.6 H14.5" stroke="#42526E" stroke-width="2.4" stroke-linecap="round"/></svg>
<span class="t"  style="left:2195.26px;top:1172.58px;font-size:28.5px;color:#0052CC;">1</span>
<span class="t"  style="left:2297.86px;top:1172.58px;font-size:28.5px;color:#0052CC;">1</span>
<div class="r" style="left:2386.5px;top:1144px;width:63.5px;height:64px;background:#F5F5F6;border-radius:6px;"></div>
<span class="t"  style="left:2409.52px;top:1161.38px;font-size:28.5px;color:#42526E;-webkit-text-stroke:0.3px #42526E;transform:scaleX(0.84);transform-origin:2.28px 50%;">E</span>
<div class="r" style="left:767px;top:1226px;width:1683px;height:2px;background:#DFE1E6;"></div>
<div class="r" style="left:781px;top:1262px;width:28px;height:28px;background:#FAFBFC;border-radius:6px;border:4px solid #DFE1E6;"></div>
<a class="t"  style="left:834.42px;top:1263.08px;font-size:28.5px;color:#0000EE;letter-spacing:-0.724px;text-decoration-thickness:2px;text-underline-offset:3px;">FRS-16</a>
<div class="r" style="left:1110px;top:1257.3px;width:375px;height:44px;overflow:hidden;">
<span class="t"  style="left:5.52px;top:5.78px;font-size:28.5px;color:#000;letter-spacing:0.225px;">Return error if sex is not correct</span>
</div>
<div class="r" style="left:1501px;top:1236px;width:160px;height:79.5px;background:#F4F5F7;border-radius:6px;"></div>
<span class="t"  style="left:1521.08px;top:1263.08px;font-size:28.5px;color:#172B4D;letter-spacing:-0.361px;">Ch...</span>
<svg class="r" style="left:1612.5px;top:1271.5px;" width="17" height="12" viewBox="0 0 17 12"><path d="M2.2 2.5 L8.5 8.7 L14.8 2.5" fill="none" stroke="#344563" stroke-width="3.8" stroke-linecap="round" stroke-linejoin="round"/></svg>
<div class="r" style="left:1687px;top:1263px;width:90px;height:32px;background:#00875A;border-radius:6px;"></div>
<span class="t"  style="left:1695.47px;top:1267.33px;font-size:23.5px;color:#fff;font-weight:bold;">PASS</span>
<div class="r" style="left:1930px;top:1262px;width:106px;height:32px;background:#DFE1E6;border-radius:6px;"></div>
<span class="t"  style="left:1949.54px;top:1266.88px;font-size:22.5px;color:#42526E;font-weight:bold;letter-spacing:0.917px;">PAS...</span>
<span class="t"  style="left:2196.26px;top:1272.58px;font-size:28.5px;color:#000;">0</span>
<span class="t"  style="left:2298.86px;top:1272.58px;font-size:28.5px;color:#000;">0</span>
<div class="r" style="left:2386.5px;top:1244px;width:63.5px;height:64px;background:#F5F5F6;border-radius:6px;"></div>
<span class="t"  style="left:2409.52px;top:1261.38px;font-size:28.5px;color:#42526E;-webkit-text-stroke:0.3px #42526E;transform:scaleX(0.84);transform-origin:2.28px 50%;">E</span>
<div class="r" style="left:767px;top:1324px;width:1683px;height:2px;background:#DFE1E6;"></div>
<div class="r" style="left:781px;top:1062px;width:28px;height:28px;background:#0052CC;border-radius:6px;border:3px solid #4C9AFF;"></div>
<svg class="r" style="left:781px;top:1062px;" width="28" height="28" viewBox="0 0 28 28"><path d="M7.5 14.5 L12 19 L20.5 10" fill="none" stroke="#fff" stroke-width="3.5" stroke-linecap="round" stroke-linejoin="round"/></svg>
<svg class="r" style="left:1070px;top:1060px;" width="30" height="30" viewBox="0 0 30 30"><path d="M15 6.4 L24.6 24 H5.4 Z" fill="#E6D200" stroke="#E6D200" stroke-width="2" stroke-linejoin="round"/><path d="M15 11.5 V18" stroke="#F6E45A" stroke-width="2.4" stroke-linecap="round"/><circle cx="15" cy="21.3" r="1.4" fill="#F6E45A"/></svg>
<div class="r" style="left:930px;top:1107px;width:311px;height:39px;background:#172B4D;border-radius:6px;"></div>
<span class="t"  style="left:942.66px;top:1114.77px;font-size:24.5px;color:#fff;letter-spacing:0.350px;">Updates Available, reload</span>
<svg class="r" style="left:1080px;top:1083px;" width="26" height="38" viewBox="0 0 26 38"><path d="M5 2.4 V29.6 L10.5 24.6 L15.4 34.4 L20.3 32.1 L15.6 22.3 L23 21 Z" fill="#000" stroke="#fff" stroke-width="1.8" stroke-linejoin="round"/></svg>
<div class="r" style="left:758px;top:1040px;width:688px;height:114px;background:#FDEE00;mix-blend-mode:multiply;"></div>
<div class="r" style="left:1710px;top:608px;width:259px;height:716px;background:#fff;border-radius:7px;box-shadow:0 6px 14px rgba(9,30,66,.16),0 0 2px rgba(9,30,66,.30);"></div>
<span class="t"  style="left:1749.80px;top:645.70px;font-size:28px;color:#000;">Passed</span>
<span class="t"  style="left:1749.80px;top:725.70px;font-size:28px;color:#000;">Failed</span>
<span class="t"  style="left:1749.80px;top:805.70px;font-size:28px;color:#000;">Blocked</span>
<span class="t"  style="left:1749.80px;top:885.50px;font-size:28px;color:#000;">Not Tested</span>
<span class="t"  style="left:1749.80px;top:965.50px;font-size:28px;color:#000;">Not Applicable</span>
<span class="t"  style="left:1749.80px;top:1045.50px;font-size:28px;color:#000;">On Hold</span>
<span class="t"  style="left:1749.80px;top:1151.50px;font-size:28px;color:#000;">Assign</span>
<div class="r" style="left:1710px;top:1112px;width:259px;height:2px;background:#E1E3E8;"></div>
<div class="r" style="left:1710px;top:1218px;width:259px;height:2px;background:#E1E3E8;"></div>
<div class="r" style="left:1709px;top:1229px;width:181px;height:81px;background:#FFF100;"></div>
<span class="t"  style="left:1749.80px;top:1257.70px;font-size:28px;color:#000;">Reload</span>
<svg class="r" style="left:2100px;top:644px;" width="40" height="40" viewBox="0 0 40 40"><path d="M14.2 4.8 C16 4.3 17.3 5.4 17.6 7 L19.5 16.2 C19.9 12.6 23.6 11.6 24.3 15 L24.6 17.2 C25.1 13.2 29.5 12.9 29.8 16.5 L30 18.6 C30.9 15.2 35.4 15.6 35.6 19 L35.6 25 C35.6 29 33.4 31 32 35.4 L17.8 35.4 C14 31 10 27 6.9 22.6 C5.3 20 7.6 17.6 10 19.5 L14 23.3 L11.5 8 C11.2 6 12.5 5 14.2 4.8 Z" fill="#fff" stroke="#000" stroke-width="1.7" stroke-linejoin="round"/><path d="M20.7 22.3 V29.5 M25.2 22.3 V29.5 M29.5 22.3 V29.5" stroke="#000" stroke-width="1.5"/></svg>
<svg class="r" style="left:0px;top:1330px;" width="22" height="22" viewBox="0 0 22 22"><path d="M0 0 A22 22 0 0 0 22 22 H0 Z" fill="#ABABAB"/><path d="M0 0 A22 22 0 0 0 22 22" fill="none" stroke="#222" stroke-width="1.6"/></svg>
<svg class="r" style="left:2458px;top:1330px;" width="22" height="22" viewBox="0 0 22 22"><path d="M22 0 A22 22 0 0 1 0 22 H22 Z" fill="#ABABAB"/><path d="M22 0 A22 22 0 0 1 0 22" fill="none" stroke="#222" stroke-width="1.6"/></svg>
</body></html>
